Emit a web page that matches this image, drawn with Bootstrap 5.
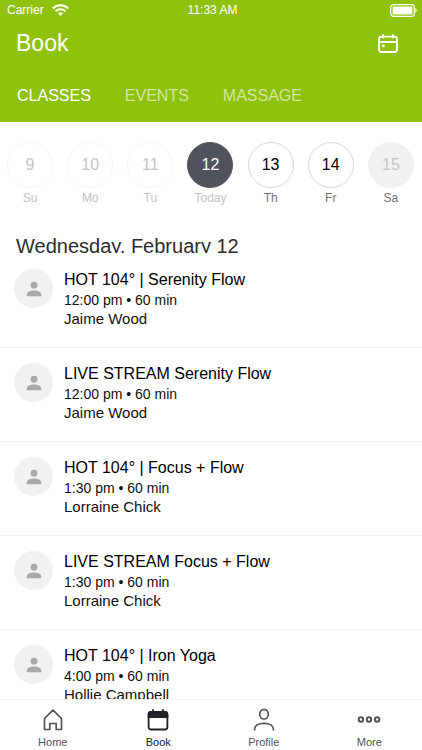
<!DOCTYPE html>
<html lang="en">
<head>
<meta charset="utf-8">
<meta name="viewport" content="width=device-width, initial-scale=1">
<title>Book</title>
<link rel="stylesheet" href="https://cdn.jsdelivr.net/npm/bootstrap@5.3.0/dist/css/bootstrap.min.css">
<style>
body { font-family: "Liberation Sans", Arial, sans-serif; color: #111; background: #fff; }
svg { display: block; }
.app-header { background: #8fc20c; color: #fff; }
.status-bar { height: 20px; font-size: 12px; line-height: 20px; padding: 0 4px 0 7px; }
.title-bar { height: 46px; padding: 0 20px 0 16px; }
.title-bar h1 { font-size: 23px; line-height: 28px; }
.tab-links { height: 56px; padding: 4px 16px 0 17px; gap: 34px; font-size: 16px; line-height: 20px; }
.tab-links a { color: #d2e79d; }
.tab-links a.active { color: #fff; }
.week { padding: 20px 1px 0 0; height: 106px; }
.day { font-size: 12px; line-height: 16px; color: #717171; }
.day-num { width: 46px; height: 46px; border: 1px solid #d8d8d8; color: #000; font-size: 16px; margin-bottom: 2px; }
.day.past, .day.today { color: #c5c5c5; }
.day.past .day-num { border-color: #f5f5f5; color: #c5c5c5; }
.day.today .day-num { background: #50525c; border-color: #50525c; color: #fff; }
.day.closed .day-num { background: #f1f1f1; border-color: #f1f1f1; color: #c5c5c5; }
.date-title { font-size: 20px; line-height: 24px; height: 19px; margin: 6px 16px 0; color: #2c2c2e; }
.schedule { scrollbar-width: none; }
.schedule::-webkit-scrollbar { display: none; }
.session { height: 94px; padding: 15px 14px 0; border-top: 1px solid #f1f1f1; gap: 11px; }
.session:first-child { border-top-color: transparent; }
.avatar { width: 39px; height: 39px; background: #f1f1f1; color: #a9a9a9; }
.session h3 { font-size: 16px; line-height: 20px; margin: 1px 0 0; color: #000; font-weight: 400; }
.session .when { font-size: 14px; line-height: 20px; }
.session .who { font-size: 15px; line-height: 18px; }
.bottom-nav { height: 51px; border-top: 1px solid #f3f3f3; background: #fff; font-size: 11px; line-height: 14px; padding-top: 8px; }
.bottom-nav a { color: #50525c; gap: 3px; }
.bottom-nav a.active { color: #202127; }
</style>
</head>
<body class="d-flex flex-column vh-100 overflow-hidden">
<svg class="d-none" aria-hidden="true">
  <symbol id="person" viewBox="0 0 16 16"><circle cx="8" cy="4.2" r="3.4"/><path d="M.7 15.2v-1.4C.7 10.800 4.600 9.500 8 9.500s7.300 1.300 7.300 4.300v1.400z"/></symbol>
</svg>
<header class="app-header flex-shrink-0">
  <div class="status-bar row g-0">
    <div class="col d-flex align-items-center gap-2"><span>Carrier</span>
      <svg width="17" height="12" viewBox="0 0 17 12" fill="none" stroke="#fff" stroke-width="2" aria-hidden="true"><path d="M.8 4.400c4.400-4.100 11-4.100 15.400 0M3.500 7.200c2.900-2.700 7.100-2.700 10 0"/><path d="M5.900 9.300c1.500-1.400 3.700-1.400 5.200 0L8.500 12z" fill="#fff" stroke="none"/></svg>
    </div>
    <div class="col text-center">11:33 AM</div>
    <div class="col d-flex align-items-center justify-content-end">
      <svg width="28" height="13" viewBox="0 0 28 13" aria-hidden="true"><rect x=".7" y=".7" width="23.600" height="11.600" rx="2.800" fill="none" stroke="#fff" stroke-width="1.200"/><rect x="2.600" y="2.600" width="19.800" height="7.800" rx="1" fill="#fff"/><path d="M25.300 4.300c1.900.5 1.900 3.900 0 4.400z" fill="#fff"/></svg>
    </div>
  </div>
  <div class="title-bar d-flex align-items-center justify-content-between">
    <h1 class="m-0 fw-normal">Book</h1>
    <button type="button" class="btn p-0 border-0 text-white me-1" aria-label="Choose a date">
      <svg width="20" height="19" viewBox="0 0 20 19" fill="none" stroke="currentColor" stroke-width="1.900"><rect x="1" y="2.600" width="18" height="15.400" rx="2.500"/><path d="M1 8h18M5 .3v4M15 .3v4"/><circle cx="5.300" cy="11.800" r="1.500" fill="currentColor" stroke="none"/></svg>
    </button>
  </div>
  <nav class="tab-links d-flex align-items-center" aria-label="Booking types">
    <a href="#classes" class="active text-decoration-none" aria-current="page">CLASSES</a>
    <a href="#events" class="text-decoration-none">EVENTS</a>
    <a href="#massage" class="text-decoration-none">MASSAGE</a>
  </nav>
</header>
<div class="week row g-0 flex-shrink-0 text-center">
  <button type="button" class="day past col btn border-0 p-0 d-flex flex-column align-items-center"><span class="day-num rounded-circle d-flex align-items-center justify-content-center">9</span><span>Su</span></button>
  <button type="button" class="day past col btn border-0 p-0 d-flex flex-column align-items-center"><span class="day-num rounded-circle d-flex align-items-center justify-content-center">10</span><span>Mo</span></button>
  <button type="button" class="day past col btn border-0 p-0 d-flex flex-column align-items-center"><span class="day-num rounded-circle d-flex align-items-center justify-content-center">11</span><span>Tu</span></button>
  <button type="button" class="day today col btn border-0 p-0 d-flex flex-column align-items-center"><span class="day-num rounded-circle d-flex align-items-center justify-content-center">12</span><span>Today</span></button>
  <button type="button" class="day col btn border-0 p-0 d-flex flex-column align-items-center"><span class="day-num rounded-circle d-flex align-items-center justify-content-center">13</span><span>Th</span></button>
  <button type="button" class="day col btn border-0 p-0 d-flex flex-column align-items-center"><span class="day-num rounded-circle d-flex align-items-center justify-content-center">14</span><span>Fr</span></button>
  <button type="button" class="day closed col btn border-0 p-0 d-flex flex-column align-items-center"><span class="day-num rounded-circle d-flex align-items-center justify-content-center">15</span><span>Sa</span></button>
</div>
<h2 class="date-title fw-normal overflow-hidden flex-shrink-0">Wednesday, February 12</h2>
<main class="schedule flex-grow-1 overflow-auto">
  <ul class="list-unstyled m-0">
    <li class="session d-flex align-items-start">
      <span class="avatar rounded-circle d-flex align-items-center justify-content-center flex-shrink-0"><svg width="16" height="16" fill="currentColor"><use href="#person"/></svg></span>
      <div><h3>HOT 104° | Serenity Flow</h3><div class="when">12:00 pm • 60 min</div><div class="who">Jaime Wood</div></div>
    </li>
    <li class="session d-flex align-items-start">
      <span class="avatar rounded-circle d-flex align-items-center justify-content-center flex-shrink-0"><svg width="16" height="16" fill="currentColor"><use href="#person"/></svg></span>
      <div><h3>LIVE STREAM Serenity Flow</h3><div class="when">12:00 pm • 60 min</div><div class="who">Jaime Wood</div></div>
    </li>
    <li class="session d-flex align-items-start">
      <span class="avatar rounded-circle d-flex align-items-center justify-content-center flex-shrink-0"><svg width="16" height="16" fill="currentColor"><use href="#person"/></svg></span>
      <div><h3>HOT 104° | Focus + Flow</h3><div class="when">1:30 pm • 60 min</div><div class="who">Lorraine Chick</div></div>
    </li>
    <li class="session d-flex align-items-start">
      <span class="avatar rounded-circle d-flex align-items-center justify-content-center flex-shrink-0"><svg width="16" height="16" fill="currentColor"><use href="#person"/></svg></span>
      <div><h3>LIVE STREAM Focus + Flow</h3><div class="when">1:30 pm • 60 min</div><div class="who">Lorraine Chick</div></div>
    </li>
    <li class="session d-flex align-items-start">
      <span class="avatar rounded-circle d-flex align-items-center justify-content-center flex-shrink-0"><svg width="16" height="16" fill="currentColor"><use href="#person"/></svg></span>
      <div><h3>HOT 104° | Iron Yoga</h3><div class="when">4:00 pm • 60 min</div><div class="who">Hollie Campbell</div></div>
    </li>
  </ul>
</main>
<nav class="bottom-nav row g-0 flex-shrink-0" aria-label="Main">
  <a href="#home" class="col d-flex flex-column align-items-center text-decoration-none">
    <svg width="24" height="24" viewBox="0 0 24 24" fill="none" stroke="currentColor" stroke-width="1.700" stroke-linejoin="round"><path d="M3.500 10.500 12 2.200l8.500 8.300V21.500h-5.300v-6h-6.400v6H3.500z"/></svg>
    <span>Home</span></a>
  <a href="#book" class="active col d-flex flex-column align-items-center text-decoration-none" aria-current="page">
    <svg width="24" height="24" viewBox="0 0 24 24" fill="none" stroke="currentColor" stroke-width="1.800"><rect x="2.600" y="4" width="18.800" height="17.500" rx="2.500"/><path d="M2.600 9.200V6.500A2.500 2.500 0 0 1 5.100 4h13.800a2.500 2.500 0 0 1 2.500 2.500v2.700z" fill="currentColor"/><path d="M7 1.300v4M17 1.300v4"/></svg>
    <span>Book</span></a>
  <a href="#profile" class="col d-flex flex-column align-items-center text-decoration-none">
    <svg width="24" height="24" viewBox="0 0 24 24" fill="none" stroke="currentColor" stroke-width="1.700"><ellipse cx="12" cy="6.200" rx="4.300" ry="4.800"/><path d="M2.600 22.500V21c0-3.300 3.700-5.600 9.400-5.600s9.400 2.300 9.400 5.600v1.500"/></svg>
    <span>Profile</span></a>
  <a href="#more" class="col d-flex flex-column align-items-center text-decoration-none">
    <svg width="24" height="24" viewBox="0 0 24 24" fill="none" stroke="currentColor" stroke-width="2"><circle cx="3.900" cy="11.500" r="2.200"/><circle cx="12" cy="11.500" r="2.200"/><circle cx="20.100" cy="11.500" r="2.200"/></svg>
    <span>More</span></a>
</nav>
<script src="https://cdn.jsdelivr.net/npm/bootstrap@5.3.0/dist/js/bootstrap.bundle.min.js"></script>
</body>
</html>
